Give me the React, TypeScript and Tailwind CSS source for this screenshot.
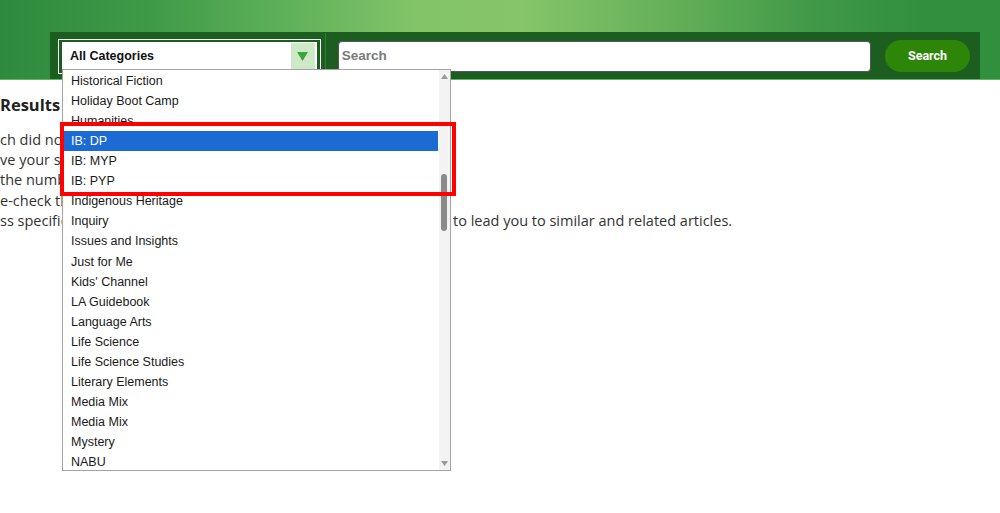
const categories = [
  'Historical Fiction',
  'Holiday Boot Camp',
  'Humanities',
  'IB: DP',
  'IB: MYP',
  'IB: PYP',
  'Indigenous Heritage',
  'Inquiry',
  'Issues and Insights',
  'Just for Me',
  "Kids' Channel",
  'LA Guidebook',
  'Language Arts',
  'Life Science',
  'Life Science Studies',
  'Literary Elements',
  'Media Mix',
  'Media Mix',
  'Mystery',
  'NABU',
]

const selected = 'IB: DP'

const hints = [
  'ch did not match any articles in our library.',
  've your search filters and try again.',
  'the number of keywords in your search.',
  'e-check the spelling of your keywords.',
]

function Header() {
  return (
    <header className="h-[80px] border-b border-[#5cb860] bg-[linear-gradient(90deg,#2e8a3d_0%,#3f9a48_15%,#62b35b_30%,#84c469_42%,#86c56a_52%,#62ae57_68%,#3f9847_82%,#31903e_92%,#31903e_100%)] pt-[32px] pl-[50px] pr-[20px]">
      <div className="flex h-[47px] items-center bg-[#1b5e20] pl-[8px] pr-[10px] pt-px">
        <div className="flex h-[35px] w-[263px] items-center border border-white p-[3px]">
          <div className="flex h-[29px] w-full items-center justify-between bg-white pl-[8px] pr-[2px]">
            <span className="font-['Liberation_Sans',Arial,sans-serif] text-[12.5px] font-bold text-[#111]">
              All Categories
            </span>
            <span className="flex h-[27px] w-[24px] items-center justify-center bg-[#cde9c6]">
              <svg width="11" height="9" viewBox="0 0 11 9">
                <path d="M0 0 L11 0 L5.5 9 Z" fill="#3fa33c" />
              </svg>
            </span>
          </div>
        </div>
        <div className="ml-[4px] h-full w-px bg-[#2f7d34]" />
        <div className="ml-[12px] flex h-[31px] w-[534px] items-center rounded-[4px] border border-[#555] bg-white pl-[3px]">
          <span className="font-['Liberation_Sans',Arial,sans-serif] text-[13.5px] font-bold text-[#7a7a7a]">
            Search
          </span>
        </div>
        <button className="ml-[14px] flex h-[32px] w-[85px] items-center justify-center rounded-full bg-[#2d8607] font-['Roboto',sans-serif] text-[12.5px] font-bold text-white">
          Search
        </button>
      </div>
    </header>
  )
}

function Dropdown() {
  return (
    <div className="absolute top-[69px] left-[62px] flex h-[402px] w-[389px] border border-[#a3a3a3] bg-white">
      <ul className="flex-1 pt-px font-['Liberation_Sans',Arial,sans-serif] text-[12.5px] text-[#1a1a1a]">
        {categories.map((name, i) => (
          <li
            key={i}
            className={
              name === selected
                ? 'mx-px flex h-[20.1px] items-center bg-[#1c6ad4] pl-[7px] text-white'
                : 'mx-px flex h-[20.1px] items-center pl-[7px]'
            }
          >
            {name}
          </li>
        ))}
      </ul>
      <div className="relative w-[11px] bg-[#f3f3f3]">
        <svg className="absolute top-[4px] left-[2px]" width="7" height="5" viewBox="0 0 7 5">
          <path d="M0 5 L3.5 0 L7 5 Z" fill="#9a9a9a" />
        </svg>
        <div className="absolute top-[104px] left-[2px] h-[57px] w-[6px] rounded-full bg-[#8a8a8a]" />
        <svg className="absolute bottom-[4px] left-[2px]" width="7" height="5" viewBox="0 0 7 5">
          <path d="M0 0 L7 0 L3.5 5 Z" fill="#9a9a9a" />
        </svg>
      </div>
    </div>
  )
}

export default function App() {
  return (
    <div className="relative h-[513px] w-[1000px] overflow-hidden bg-white">
      <Header />
      <main className="font-['Open_Sans',sans-serif] text-[#333]">
        <h2 className="mt-[14px] h-[22px] text-[16.5px] leading-[22px] font-bold text-[#222]">Results</h2>
        <div className="mt-[14px] text-[14.5px] leading-[20.2px] whitespace-nowrap">
          {hints.map((line) => (
            <p key={line} className="w-[62px] overflow-hidden">
              {line}
            </p>
          ))}
          <p className="flex">
            <span className="w-[62px] overflow-hidden">ss specific keywords, which are more likely</span>
            <span className="ml-[391px]">to lead you to similar and related articles.</span>
          </p>
        </div>
      </main>
      <Dropdown />
      <div className="absolute top-[122px] left-[60px] h-[74px] w-[396px] border-4 border-[#ff0000]" />
    </div>
  )
}
